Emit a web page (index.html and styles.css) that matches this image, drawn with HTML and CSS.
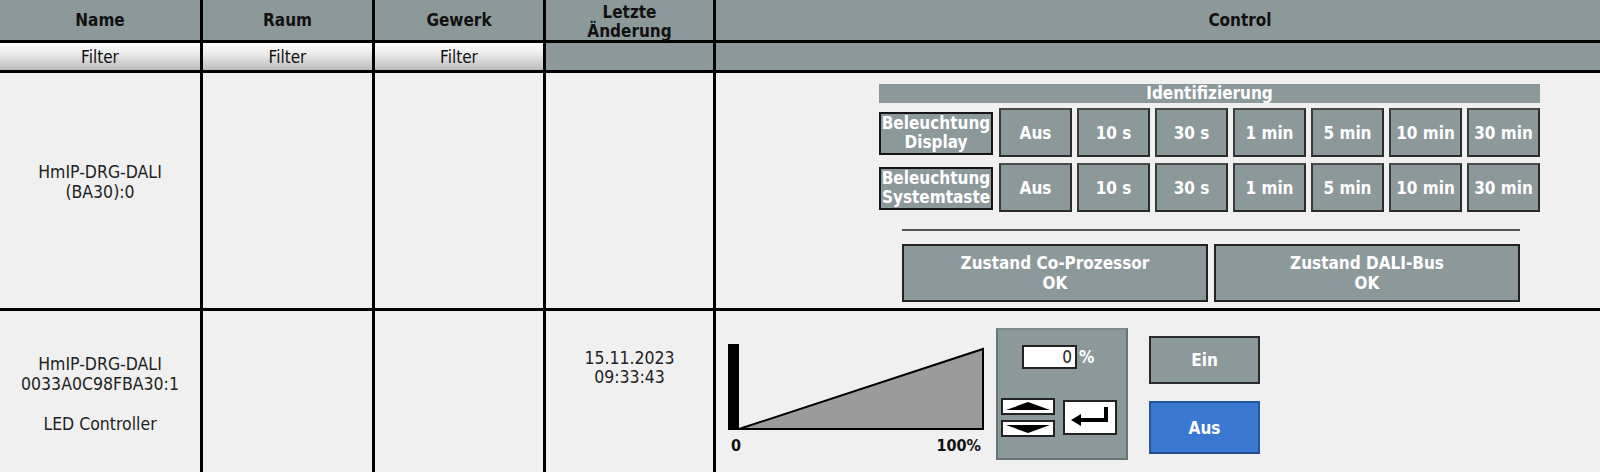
FILE: index.html
```html
<!DOCTYPE html>
<html lang="de">
<head>
<meta charset="utf-8">
<title>HmIP-DRG-DALI</title>
<link rel="stylesheet" href="styles.css">
</head>
<body>
<div class="grid">
  <div class="hd">Name</div>
  <div class="hd">Raum</div>
  <div class="hd">Gewerk</div>
  <div class="hd two">Letzte<br>Änderung</div>
  <div class="hd control-hd">Control</div>

  <div class="filter">Filter</div>
  <div class="filter">Filter</div>
  <div class="filter">Filter</div>
  <div class="filter-empty"></div>
  <div class="filter-empty"></div>

  <div class="cell name name-top">HmIP-DRG-DALI<br>(BA30):0</div>
  <div class="cell"></div>
  <div class="cell"></div>
  <div class="cell"></div>
  <div class="cell ctrl1">
    <div class="ident">
      <div class="ident-title">Identifizierung</div>
      <div class="ident-row">
        <div class="ident-label">Beleuchtung<br>Display</div>
        <div class="btn">Aus</div>
        <div class="btn">10 s</div>
        <div class="btn">30 s</div>
        <div class="btn">1 min</div>
        <div class="btn">5 min</div>
        <div class="btn">10 min</div>
        <div class="btn">30 min</div>
      </div>
      <div class="ident-row">
        <div class="ident-label">Beleuchtung<br>Systemtaste</div>
        <div class="btn">Aus</div>
        <div class="btn">10 s</div>
        <div class="btn">30 s</div>
        <div class="btn">1 min</div>
        <div class="btn">5 min</div>
        <div class="btn">10 min</div>
        <div class="btn">30 min</div>
      </div>
      <div class="sep"></div>
      <div class="status-row">
        <div class="status">Zustand Co-Prozessor<br>OK</div>
        <div class="status">Zustand DALI-Bus<br>OK</div>
      </div>
    </div>
  </div>

  <div class="cell name">HmIP-DRG-DALI<br>0033A0C98FBA30:1<br><br>LED Controller</div>
  <div class="cell"></div>
  <div class="cell"></div>
  <div class="cell date">15.11.2023<br>09:33:43</div>
  <div class="cell ctrl2">
    <svg class="slider" width="257" height="120" viewBox="0 0 257 120">
      <polygon points="11,89 255,9 255,89" fill="#9b9b9b" stroke="#000" stroke-width="2" stroke-linejoin="miter"/>
      <rect x="0" y="4" width="11" height="86" fill="#000"/>
      <text x="3" y="111" class="sl-text">0</text>
      <text x="253" y="111" class="sl-text" text-anchor="end">100%</text>
    </svg>
    <div class="panel">
      <div class="val-row">
        <div class="val">0</div>
        <span class="pct">%</span>
      </div>
      <div class="ctl-row">
        <div class="arrows">
          <div class="arrow-btn">
            <svg width="50" height="13" viewBox="0 0 50 13"><polygon points="3,10 25,2 47,10" fill="#000"/></svg>
          </div>
          <div class="arrow-btn">
            <svg width="50" height="13" viewBox="0 0 50 13"><polygon points="3,3 25,11 47,3" fill="#000"/></svg>
          </div>
        </div>
        <div class="enter-btn">
          <svg width="50" height="31" viewBox="0 0 50 31">
            <path d="M41 5 V18 H15" fill="none" stroke="#000" stroke-width="4"/>
            <polygon points="6,18 16,12 16,24" fill="#000"/>
          </svg>
        </div>
      </div>
    </div>
    <div class="onoff">
      <div class="ein">Ein</div>
      <div class="aus">Aus</div>
    </div>
  </div>
</div>
</body>
</html>
```

FILE: styles.css
```css
html, body {
  margin: 0;
  padding: 0;
  background: #f0f0f0;
  overflow: hidden;
}
body {
  font-family: "DejaVu Sans Condensed", "DejaVu Sans", sans-serif;
  font-stretch: condensed;
  font-size: 17px;
  color: #222;
}
.grid {
  display: grid;
  width: 1600px;
  grid-template-columns: 200px 169px 168px 167px 1fr;
  grid-template-rows: 40px 27px 235px 165px;
  gap: 3px;
  background: #000;
}
.hd {
  background: #8c999b;
  color: #111;
  font-weight: bold;
  display: flex;
  align-items: center;
  justify-content: center;
  text-align: center;
  line-height: 19px;
}
.hd.two {
  align-items: flex-start;
  padding-top: 3px;
}
.control-hd {
  padding-left: 164px;
}
.filter {
  background: linear-gradient(#ffffff 0%, #ebebeb 40%, #bcbcbc 100%);
  color: #111;
  display: flex;
  align-items: center;
  justify-content: center;
}
.filter-empty {
  background: #8c999b;
}
.cell {
  background: #f0f0f0;
}
.name {
  display: flex;
  align-items: center;
  justify-content: center;
  text-align: center;
  line-height: 20px;
  font-size: 17.5px;
}
.name-top {
  padding-bottom: 17px;
}
.date {
  text-align: center;
  line-height: 19px;
  padding-top: 38px;
  font-size: 17.5px;
}
.ctrl1 {
  padding: 11px 0 0 163px;
}
.ident {
  width: 661px;
  display: flex;
  flex-direction: column;
}
.ident-title {
  height: 19px;
  line-height: 19px;
  background: #8c999b;
  color: #fff;
  font-weight: bold;
  text-align: center;
}
.ident-row {
  display: flex;
  align-items: center;
  gap: 5px;
  margin-top: 5px;
}
.ident-row + .ident-row {
  margin-top: 6px;
}
.ident-label {
  box-sizing: border-box;
  width: 114px;
  height: 43px;
  margin-top: 2px;
  margin-right: 1px;
  background: #8c999b;
  border: 2px solid #151515;
  color: #fff;
  font-weight: bold;
  text-align: center;
  line-height: 19px;
  white-space: nowrap;
}
.btn {
  box-sizing: border-box;
  width: 73px;
  height: 49px;
  background: #8c999b;
  border: 2px solid #2b2b2b;
  border-top-color: #4a4a4a;
  border-left-color: #3a3a3a;
  color: #fff;
  font-weight: bold;
  display: flex;
  align-items: center;
  justify-content: center;
  white-space: nowrap;
}
.sep {
  height: 2px;
  background: #555;
  margin: 17px 20px 0 23px;
}
.status-row {
  display: flex;
  gap: 6px;
  margin: 13px 0 0 23px;
}
.status {
  box-sizing: border-box;
  width: 306px;
  height: 58px;
  background: #8c999b;
  border: 2px solid #222;
  color: #fff;
  font-weight: bold;
  text-align: center;
  line-height: 20px;
  display: flex;
  align-items: center;
  justify-content: center;
}
.ctrl2 {
  display: flex;
  align-items: flex-start;
  padding-left: 12px;
}
.slider {
  margin-top: 29px;
  display: block;
}
.sl-text {
  font-family: "DejaVu Sans", sans-serif;
  font-weight: bold;
  font-size: 16px;
  fill: #111;
}
.panel {
  box-sizing: border-box;
  width: 132px;
  height: 132px;
  margin: 17px 0 0 11px;
  background: #8c999b;
  border: 2px solid #6a7476;
  border-top-color: #7c8789;
  padding: 15px 0 0 3px;
  display: flex;
  flex-direction: column;
}
.val-row {
  display: flex;
  align-items: center;
  margin-left: 21px;
}
.val {
  box-sizing: border-box;
  width: 55px;
  height: 24px;
  background: #fff;
  border: 2px solid #222;
  text-align: right;
  padding-right: 3px;
  line-height: 20px;
  color: #222;
}
.pct {
  color: #fff;
  font-weight: bold;
  margin-left: 2px;
}
.ctl-row {
  display: flex;
  gap: 8px;
  margin-top: 29px;
}
.arrows {
  display: flex;
  flex-direction: column;
  gap: 5px;
}
.arrow-btn {
  box-sizing: border-box;
  width: 54px;
  height: 17px;
  background: #fff;
  border: 2px solid #222;
  display: flex;
}
.arrow-btn svg,
.enter-btn svg {
  display: block;
}
.enter-btn {
  box-sizing: border-box;
  width: 54px;
  height: 35px;
  margin-top: 2px;
  background: #fff;
  border: 2px solid #222;
}
.onoff {
  display: flex;
  flex-direction: column;
  gap: 17px;
  margin: 25px 0 0 21px;
}
.ein, .aus {
  box-sizing: border-box;
  width: 111px;
  color: #fff;
  font-weight: bold;
  display: flex;
  align-items: center;
  justify-content: center;
}
.ein {
  height: 48px;
  background: #8c999b;
  border: 2px solid #2a2a2a;
}
.aus {
  height: 53px;
  background: #3a77d0;
  border: 2px solid #23579f;
  border-bottom-color: #1d4a8a;
}
```
